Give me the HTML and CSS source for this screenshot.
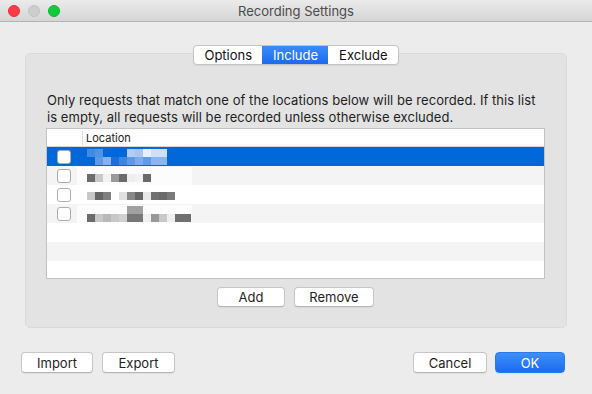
FILE: index.html
```html
<!DOCTYPE html>
<html lang="en">
<head>
<meta charset="utf-8">
<title>Recording Settings</title>
<link rel="stylesheet" href="styles.css">
</head>
<body>
<div class="window">
  <header class="titlebar">
    <div class="lights">
      <span class="light red"></span>
      <span class="light gray"></span>
      <span class="light green"></span>
    </div>
    <div class="title">Recording Settings</div>
    <div></div>
  </header>
  <main class="content">
    <div class="tabs">
      <button class="tab">Options</button>
      <button class="tab active">Include</button>
      <button class="tab">Exclude</button>
    </div>
    <section class="group">
      <p class="desc">Only requests that match one of the locations below will be recorded. If this list<br>is empty, all requests will be recorded unless otherwise excluded.</p>
      <div class="table">
        <div class="thead">
          <div class="col-check"></div>
          <div class="col-loc">Location</div>
        </div>
        <div class="tbody">
          <div class="row selected">
            <div class="col-check"><span class="checkbox"></span></div>
            <div class="col-loc"><span class="blur b1"></span></div>
          </div>
          <div class="row alt">
            <div class="col-check"><span class="checkbox"></span></div>
            <div class="col-loc"><span class="pad"><span class="blur b2"></span></span></div>
          </div>
          <div class="row">
            <div class="col-check"><span class="checkbox"></span></div>
            <div class="col-loc"><span class="blur b3"></span></div>
          </div>
          <div class="row alt">
            <div class="col-check"><span class="checkbox"></span></div>
            <div class="col-loc"><span class="pad"><span class="blur b4"></span></span></div>
          </div>
          <div class="row"></div>
          <div class="row alt"></div>
          <div class="row"></div>
        </div>
      </div>
      <div class="actions">
        <button class="btn w-add">Add</button>
        <button class="btn w-remove">Remove</button>
      </div>
    </section>
  </main>
  <footer class="footer">
    <div class="btn-group">
      <button class="btn w-import">Import</button>
      <button class="btn w-export">Export</button>
    </div>
    <div class="btn-group">
      <button class="btn w-cancel">Cancel</button>
      <button class="btn primary w-ok">OK</button>
    </div>
  </footer>
</div>
</body>
</html>
```
FILE: styles.css
```css
* { box-sizing: border-box; }
html, body { margin: 0; padding: 0; }
body {
  background: #ececec;
  font-family: Inter, "Liberation Sans", Arial, sans-serif;
  font-size: 13px;
  color: #1e1e1e;
  width: 592px;
  height: 394px;
  overflow: hidden;
}
.window { display: flex; flex-direction: column; height: 394px; }

.titlebar {
  height: 22px;
  display: grid;
  grid-template-columns: 1fr auto 1fr;
  align-items: center;
  background: linear-gradient(#ebebeb, #d5d5d5);
  border-bottom: 1px solid #b3b3b3;
}
.lights { display: flex; gap: 8px; padding-left: 8px; }
.light { width: 12px; height: 12px; border-radius: 50%; display: block; }
.light.red { background: #fd3b45; border: 1px solid #e6303a; }
.light.gray { background: #cdcdcd; border: 1px solid #c2c2c2; }
.light.green { background: #12cb3a; border: 1px solid #0db333; }
.title { font-size: 13px; color: #4b4b4b; }

.content { padding: 23px 25px 0; display: flex; flex-direction: column; }

.tabs {
  align-self: center;
  display: flex;
  height: 20px;
  background: #fff;
  border: 1px solid #c4c4c4;
  border-radius: 4px;
  box-shadow: 0 1px 1px rgba(0,0,0,0.06);
  position: relative;
  z-index: 1;
  overflow: hidden;
}
.tab {
  font: inherit;
  color: #111;
  background: transparent;
  border: 0;
  padding: 0 10px;
  height: 18px;
  line-height: 18px;
}
.tab + .tab { border-left: 1px solid #d6d6d6; }
.tab.active {
  background: linear-gradient(#3d8bf7, #1a6bf0);
  color: #fff;
  border-left-color: transparent;
}
.tab.active + .tab { border-left-color: transparent; }

.group {
  margin-top: -12px;
  height: 275px;
  background: #e3e3e3;
  border: 1px solid #dadada;
  border-radius: 5px;
  padding: 38px 21px 0 20px;
}
.desc {
  margin: 0;
  line-height: 17px;
  font-size: 13px;
  color: #1e1e1e;
  padding-left: 1px;
  letter-spacing: 0.05px;
  white-space: nowrap;
}
.table {
  margin-top: 2px;
  background: #fff;
  border: 1px solid #c2c2c2;
}
.thead {
  display: flex;
  height: 18px;
  border-bottom: 1px solid #d4d4d4;
  font-size: 11px;
  color: #222;
  align-items: center;
}
.thead .col-loc {
  border-left: 1px solid #dcdcdc;
  height: 14px;
  line-height: 14px;
  padding-left: 3px;
}
.col-check {
  width: 35px;
  flex: none;
  display: flex;
  align-items: center;
  padding-left: 10px;
}
.col-loc { flex: 1; display: flex; align-items: center; }
.tbody { height: 131px; overflow: hidden; }
.row { height: 19px; display: flex; align-items: center; }
.row.alt { background: #f4f4f4; }
.row.selected { background: #0068d9; }
.checkbox {
  width: 14px;
  height: 14px;
  border: 1px solid #adadad;
  border-radius: 3px;
  background: #fff;
  display: block;
}
.row .col-loc { padding-left: 5px; height: 19px; }
.pad {
  display: flex;
  align-items: center;
  background: #fcfcfc;
  margin-left: -10px;
  padding-left: 10px;
  width: 115px;
  height: 18px;
}
.blur { display: block; height: 16px; }
.b1 {
  width: 80px;
  background:
    linear-gradient(to right, #3f8ce2 0 8px, #4c95e6 8px 16px, transparent 16px 40px, #b3cdf2 40px 48px, #a9c6f1 48px 56px, #e6effc 56px 64px, #d0dffa 64px 80px) top / 100% 8px no-repeat,
    linear-gradient(to right, transparent 0 8px, #5b9be6 8px 16px, #85b2ec 16px 24px, #1a6fdc 24px 32px, #3d86e0 32px 40px, #5a9ae6 40px 48px, #7aaeea 48px 56px, #5c9de6 56px 64px, #8ab6ee 64px 80px) bottom / 100% 8px no-repeat;
}
.b2 {
  width: 64px;
  height: 8px;
  margin-top: 4px;
  background: linear-gradient(to right, #6b6b6b 0 8px, #c8c8c8 8px 16px, #f2f2f2 16px 24px, #9a9a9a 24px 32px, #6b6b6b 32px 40px, #eeeeee 40px 48px, #f2f2f2 48px 56px, #6b6b6b 56px 64px);
}
.b3 {
  width: 88px;
  height: 8px;
  margin-top: 2px;
  background: linear-gradient(to right, #c8c8c8 0 8px, #666 8px 16px, #808080 16px 24px, #fff 24px 32px, #e0e0e0 32px 40px, #888 40px 48px, #666 48px 56px, #e8e8e8 56px 64px, #707070 64px 72px, #6a6a6a 72px 80px, #7a7a7a 80px 88px);
}
.b4 {
  width: 104px;
  background:
    linear-gradient(to right, transparent 0 40px, #a0a0a0 40px 56px, transparent 56px) top / 100% 8px no-repeat,
    linear-gradient(to right, #6b6b6b 0 8px, #c8c8c8 8px 16px, #b8b8b8 16px 24px, #c8c8c8 24px 32px, #d0d0d0 32px 40px, #777 40px 56px, #f0f0f0 56px 64px, #999 64px 72px, #c8c8c8 72px 80px, #eee 80px 88px, #707070 88px 104px) bottom / 100% 8px no-repeat;
}

.actions {
  display: flex;
  justify-content: center;
  gap: 9px;
  margin-top: 8px;
}
.btn {
  font: inherit;
  font-size: 13px;
  color: #1e1e1e;
  height: 20px;
  padding: 0;
  background: #fff;
  border: 1px solid #c6c6c6;
  border-bottom-color: #b5b5b5;
  border-radius: 4px;
  box-shadow: 0 1px 1px rgba(0,0,0,0.05);
}
.btn.primary {
  background: linear-gradient(#3f8ef8, #1b6cf0);
  border-color: #2a78f0;
  color: #fff;
}
.w-add { width: 68px; }
.w-remove { width: 80px; }
.w-import { width: 72px; }
.w-export { width: 73px; }
.w-cancel { width: 74px; }
.w-ok { width: 70px; }

.footer {
  display: flex;
  justify-content: space-between;
  padding: 0 27px 0 21px;
  margin-top: 24px;
}
.footer .btn { height: 21px; }
.btn-group { display: flex; gap: 9px; }
.btn-group .w-ok { margin-left: -1px; }
```
